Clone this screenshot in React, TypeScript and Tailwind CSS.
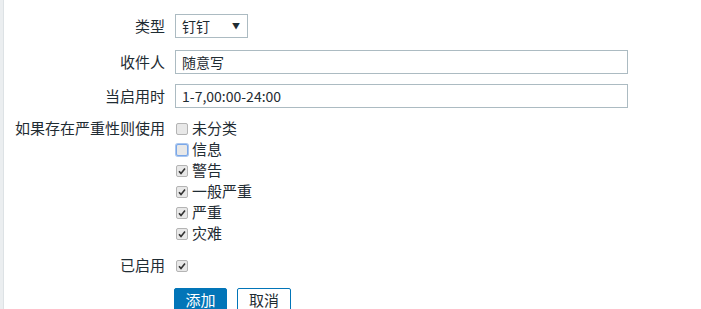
import React from "react";

const font = { fontFamily: '"Noto Sans CJK SC", "Liberation Sans", sans-serif' };

function Box({ checked, focused }: { checked?: boolean; focused?: boolean }) {
  return (
    <span
      className={
        "flex h-[12px] w-[12px] shrink-0 items-center justify-center rounded-[2px] border bg-[#e8e8e8] " +
        (focused ? "border-[#7aa7e8] shadow-[0_0_0_1px_#a9c6f0]" : "border-[#b4b4b4]")
      }
    >
      {checked ? (
        <svg width="8" height="8" viewBox="0 0 8 8">
          <path d="M1 4.2 L3 6.4 L7 1.4" fill="none" stroke="#333" strokeWidth="1.6" />
        </svg>
      ) : null}
    </span>
  );
}

const severities = [
  { name: "未分类", checked: false },
  { name: "信息", checked: false, focused: true },
  { name: "警告", checked: true },
  { name: "一般严重", checked: true },
  { name: "严重", checked: true },
  { name: "灾难", checked: true },
];

export default function App() {
  return (
    <div className="flex h-[309px] w-[701px] overflow-hidden bg-white text-[15px] text-[#1f2c33]" style={font}>
      <div className="w-[4px] shrink-0 border-r border-[#dde2e5] bg-[#ebeef0]" />
      <div className="flex flex-1 flex-col pt-[14px]">
        <div className="flex h-[24px] items-center">
          <div className="w-[171px] pr-[10px] text-right">类型</div>
          <div className="flex h-[24px] w-[73px] items-center justify-between border border-[#acbbc2] pl-[6px] pr-[7px] text-[14px]">
            <span>钉钉</span>
            <span className="text-[8px]">▼</span>
          </div>
        </div>
        <div className="mt-[12px] flex h-[24px] items-center">
          <div className="w-[171px] pr-[10px] text-right">收件人</div>
          <div className="flex h-[24px] w-[453px] items-center border border-[#acbbc2] px-[6px] text-[14px]">随意写</div>
        </div>
        <div className="mt-[10px] flex h-[24px] items-center">
          <div className="w-[171px] pr-[10px] text-right">当启用时</div>
          <div className="flex h-[24px] w-[453px] items-center border border-[#acbbc2] px-[6px] text-[14px]">1-7,00:00-24:00</div>
        </div>
        <div className="mt-[10px] flex">
          <div className="flex h-[21px] w-[171px] items-center justify-end pr-[10px] whitespace-nowrap">如果存在严重性则使用</div>
          <div className="flex flex-col">
            {severities.map((s) => (
              <label key={s.name} className="flex h-[21px] items-center gap-[4px] pl-[1px]">
                <Box checked={s.checked} focused={s.focused} />
                <span>{s.name}</span>
              </label>
            ))}
          </div>
        </div>
        <div className="mt-[11px] flex h-[21px] items-center">
          <div className="w-[171px] pr-[10px] text-right">已启用</div>
          <div className="pl-[1px]">
            <Box checked />
          </div>
        </div>
        <div className="mt-[12px] flex gap-[10px] pl-[170px]">
          <button className="h-[24px] w-[53px] rounded-[2px] border border-[#0275b8] bg-[#0275b8] text-[15px] text-white">添加</button>
          <button className="h-[24px] w-[54px] rounded-[2px] border border-[#0275b8] bg-white text-[15px] text-[#1f2c33]">取消</button>
        </div>
      </div>
    </div>
  );
}
